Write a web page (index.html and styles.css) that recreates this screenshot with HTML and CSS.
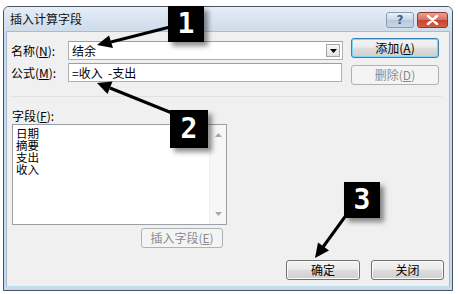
FILE: index.html
```html
<!DOCTYPE html>
<html lang="zh-CN">
<head>
<meta charset="utf-8">
<title>插入计算字段</title>
<link rel="stylesheet" href="styles.css">
</head>
<body>
<div class="stage">
  <div class="window">
    <div class="titlebar">
      <span class="title">插入计算字段</span>
      <div class="caption-btns">
        <span class="cap-btn help">?</span>
        <span class="cap-btn close"><svg width="13" height="10" viewBox="0 0 13 10"><path d="M2 1 L11 9 M11 1 L2 9" stroke="#fff" stroke-width="2.4" stroke-linecap="round"/></svg></span>
      </div>
    </div>
    <div class="frame">
      <div class="client">
        <div class="row row1">
          <span class="lbl">名称(<u>N</u>):</span>
          <div class="combo"><span class="val">结余</span><span class="drop"><svg width="7" height="4" viewBox="0 0 7 4"><path d="M0 0 H7 L3.5 4 Z" fill="#000"/></svg></span></div>
          <button class="btn default">添加(<u>A</u>)</button>
        </div>
        <div class="row row2">
          <span class="lbl">公式(<u>M</u>):</span>
          <div class="input">=收入&nbsp; -支出</div>
          <button class="btn disabled">删除(<u>D</u>)</button>
        </div>
        <div class="sep"></div>
        <div class="fields-lbl">字段(<u>F</u>):</div>
        <div class="listbox">
          <ul class="items">
            <li>日期</li>
            <li>摘要</li>
            <li>支出</li>
            <li>收入</li>
          </ul>
          <div class="vscroll">
            <svg width="7" height="4" viewBox="0 0 7 4"><path d="M0 4 H7 L3.5 0 Z" fill="#a8a8a8"/></svg>
            <svg width="7" height="4" viewBox="0 0 7 4"><path d="M0 0 H7 L3.5 4 Z" fill="#a8a8a8"/></svg>
          </div>
        </div>
        <div class="insert-row"><button class="btn disabled insert">插入字段(<u>E</u>)</button></div>
        <div class="footer">
          <button class="btn ok">确定</button>
          <button class="btn cancel">关闭</button>
        </div>
      </div>
    </div>
  </div>

  <svg class="arrows" width="460" height="294" viewBox="0 0 460 294">
    <line x1="170" y1="27" x2="111" y2="42" stroke="#000" stroke-width="3"/>
    <polygon points="97,45 109,35.5 113,48" fill="#000"/>
    <line x1="172" y1="113" x2="110" y2="88" stroke="#000" stroke-width="3"/>
    <polygon points="97,83 112.5,81.5 107.5,94" fill="#000"/>
    <line x1="347" y1="214" x2="323" y2="247" stroke="#000" stroke-width="3"/>
    <polygon points="315,258 318,242.5 329,250.5" fill="#000"/>
  </svg>
  <div class="badge b1">1</div>
  <div class="badge b2">2</div>
  <div class="badge b3">3</div>
</div>
</body>
</html>
```

FILE: styles.css
```css
* { box-sizing: border-box; }
html, body { margin: 0; padding: 0; background: #fff; }
body {
  font-family: "Noto Sans CJK SC", "Noto Sans", sans-serif;
  font-size: 12px;
  color: #000;
}
.stage {
  position: relative;
  width: 460px;
  height: 294px;
  overflow: hidden;
}
.window {
  margin: 6px 0 0 3px;
  width: 450px;
  height: 285px;
  border: 1px solid #4a545e;
  border-radius: 6px 6px 0 0;
  background: #c6daee;
  display: flex;
  flex-direction: column;
}
.titlebar {
  height: 24px;
  flex: none;
  display: flex;
  align-items: flex-start;
  justify-content: space-between;
  padding: 0 4px 0 6px;
  border-radius: 5px 5px 0 0;
  background: linear-gradient(#e6eef7, #d6e2ef 60%, #cfdcea);
}
.title {
  line-height: 24px;
  font-size: 12px;
  color: #111;
}
.caption-btns {
  display: flex;
  gap: 3px;
  margin-top: 5px;
}
.cap-btn {
  height: 16px;
  border-radius: 3px;
  display: flex;
  align-items: center;
  justify-content: center;
}
.help {
  width: 28px;
  border: 1px solid #8a9cb3;
  background: linear-gradient(#e9f0f8, #c9d6e6 50%, #b9c9dd 51%, #c7d5e6);
  color: #4a5f7a;
  font-family: "DejaVu Sans", sans-serif;
  font-size: 12px;
  font-weight: bold;
}
.close {
  width: 31px;
  border: 1px solid #8d3a2f;
  background: linear-gradient(#e8a093, #d66f5f 50%, #c8412d 51%, #d2604b);
}
.frame {
  flex: 1;
  padding: 0 2px 3px 2px;
  display: flex;
}
.client {
  flex: 1;
  background: #f0f0f0;
  border: 1px solid #a9bbcf;
  border-bottom-color: #bfe0f0;
  display: flex;
  flex-direction: column;
}
.row {
  display: flex;
  align-items: flex-start;
  padding-left: 4px;
}
.row1 { margin-top: 6px; }
.row2 { margin-top: 3px; }
.lbl {
  width: 57px;
  height: 19px;
  line-height: 19px;
  white-space: nowrap;
}
.row1 .lbl { margin-top: 3px; }
.combo, .input {
  height: 19px;
  background: #fff;
  border: 1px solid #abb0b7;
  border-top-color: #9aa0a8;
  display: flex;
  align-items: center;
  padding-left: 3px;
  line-height: 17px;
}
.combo {
  width: 275px;
  margin-top: 3px;
  justify-content: space-between;
  padding-right: 2px;
}
.input { width: 274px; }
.drop {
  width: 14px;
  height: 13px;
  border: 1px solid #a2a6ab;
  background: linear-gradient(#f8f8f8, #e2e2e2);
  display: flex;
  align-items: center;
  justify-content: center;
}
.btn {
  height: 20px;
  padding: 0;
  border: 1px solid #707070;
  border-radius: 3px;
  background: linear-gradient(#f3f3f3, #ebebeb 45%, #dddddd 50%, #cfcfcf);
  box-shadow: inset 0 0 0 1px #fbfbfb;
  font-family: "Noto Sans CJK SC", "Noto Sans", sans-serif;
  font-size: 12px;
  line-height: 18px;
  color: #000;
}
.btn.default {
  width: 88px;
  margin-left: 8px;
  border-color: #3c7fb1;
  box-shadow: inset 0 0 0 1px #7fd4f7;
}
.btn.disabled {
  background: #f4f4f4;
  border-color: #adb2b5;
  box-shadow: none;
  color: #8b8b8b;
}
.row2 .btn {
  width: 88px;
  margin-left: 9px;
  margin-top: 2px;
}
.sep {
  margin: 11px 7px 0 3px;
  height: 1px;
  background: #dfe3e6;
}
.fields-lbl {
  margin-top: 12px;
  padding-left: 5px;
  height: 14px;
  line-height: 14px;
}
.listbox {
  margin: 1px 0 0 5px;
  width: 215px;
  height: 101px;
  background: #fff;
  border: 1px solid #9a9fa5;
  display: flex;
}
.items {
  flex: 1;
  list-style: none;
  margin: 0;
  padding: 2px 0 0 3px;
}
.items li {
  height: 12px;
  line-height: 12px;
  font-size: 11.5px;
  overflow: visible;
}
.vscroll {
  width: 17px;
  background: #f7f7f7;
  border-left: 1px solid #f0f0f0;
  display: flex;
  flex-direction: column;
  justify-content: space-between;
  align-items: center;
  padding: 8px 0 8px;
}
.insert-row { margin-top: 3px; }
.btn.insert {
  width: 82px;
  margin-left: 134px;
}
.footer {
  margin-top: 12px;
  display: flex;
  justify-content: flex-end;
  gap: 11px;
  padding-right: 5px;
}
.btn.ok { width: 74px; }
.btn.cancel { width: 73px; }

.arrows {
  position: absolute;
  left: 0;
  top: 0;
  pointer-events: none;
}
.badge {
  position: absolute;
  width: 36px;
  height: 36px;
  background: #000;
  color: #fff;
  font-family: "DejaVu Sans Mono", monospace;
  font-weight: bold;
  font-size: 28px;
  line-height: 36px;
  text-align: center;
  box-shadow: 4px 4px 5px rgba(0, 0, 0, 0.45);
}
.b1 { left: 168px; top: 6px; }
.b2 { left: 170px; top: 110px; width: 38px; height: 38px; line-height: 38px; }
.b3 { left: 344px; top: 182px; }
```
